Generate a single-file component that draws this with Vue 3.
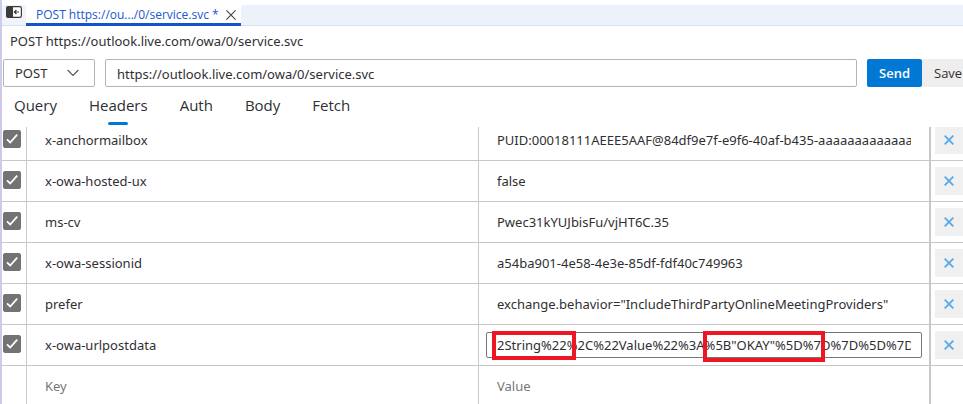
<script setup>
import { ref } from 'vue'

const title = 'POST https://outlook.live.com/owa/0/service.svc'
const method = ref('POST')
const url = ref('https://outlook.live.com/owa/0/service.svc')
const sections = ['Query', 'Headers', 'Auth', 'Body', 'Fetch']
const active = ref('Headers')
const rows = ref([
  { on: true, key: 'x-anchormailbox', value: 'PUID:00018111AEEE5AAF@84df9e7f-e9f6-40af-b435-aaaaaaaaaaaaaa' },
  { on: true, key: 'x-owa-hosted-ux', value: 'false' },
  { on: true, key: 'ms-cv', value: 'Pwec31kYUJbisFu/vjHT6C.35' },
  { on: true, key: 'x-owa-sessionid', value: 'a54ba901-4e58-4e3e-85df-fdf40c749963' },
  { on: true, key: 'prefer', value: 'exchange.behavior="IncludeThirdPartyOnlineMeetingProviders"' },
  { on: true, key: 'x-owa-urlpostdata', value: '2String%22%2C%22Value%22%3A%5B"OKAY"%5D%7D%7D%5D%7D', marked: true },
])
const draft = ref({ key: '', value: '' })

function removeRow(index) {
  rows.value.splice(index, 1)
}
</script>

<template>
  <div class="app">
    <header class="tabbar">
      <button class="panel-toggle" type="button" aria-label="Collapse panel">
        <svg width="16" height="12" viewBox="0 0 16 12">
          <rect x="0.6" y="0.6" width="14.8" height="10.8" rx="1.6" fill="#fff" stroke="#3b3b3b" stroke-width="1.2" />
          <path d="M1.8 0.6H7v10.8H1.8A1.2 1.2 0 0 1 .6 10.2V1.8A1.2 1.2 0 0 1 1.8.6z" fill="#3b3b3b" />
          <path d="M13 6H8.600M10.400 4L8.400 6l2 2" fill="none" stroke="#3b3b3b" stroke-width="1.2" />
        </svg>
      </button>
      <div class="tab">
        <a class="tab-link" href="#request">POST https://ou.../0/service.svc *</a>
        <button class="tab-close" type="button" aria-label="Close tab">
          <svg width="10" height="10" viewBox="0 0 10 10">
            <path d="M0.4 0.4L9.6 9.6M9.6 0.4L0.4 9.6" stroke="#444" stroke-width="1.1" />
          </svg>
        </button>
      </div>
      <div class="tab-rest"></div>
    </header>

    <main id="request" class="request">
      <h1 class="title">{{ title }}</h1>

      <div class="url-row">
        <div class="method">
          <select v-model="method" aria-label="Method">
            <option>POST</option>
            <option>GET</option>
          </select>
          <svg class="chevron" width="12" height="8" viewBox="0 0 12 8">
            <path d="M0.6 1L6 6.500 11.400 1" fill="none" stroke="#555" stroke-width="1.1" />
          </svg>
        </div>
        <input v-model="url" class="url" type="text" aria-label="URL" />
        <div class="actions">
          <button class="send" type="button">Send</button>
          <button class="save" type="button">Save</button>
        </div>
      </div>

      <nav class="sections">
        <button
          v-for="name in sections"
          :key="name"
          type="button"
          class="section"
          :class="{ active: name === active }"
          @click="active = name"
        >{{ name }}</button>
      </nav>

      <div class="scroller">
        <table class="headers">
          <colgroup>
            <col class="col-check" />
            <col />
            <col />
            <col class="col-delete" />
          </colgroup>
          <tbody>
            <tr v-for="(row, i) in rows" :key="row.key">
              <td class="check">
                <input v-model="row.on" type="checkbox" :aria-label="'Enable ' + row.key" />
                <svg v-if="row.on" class="tick" width="18" height="18" viewBox="0 0 18 18">
                  <path d="M4 9.300L7.200 12.500 14.200 4.600" fill="none" stroke="#fff" stroke-width="1.8" />
                </svg>
              </td>
              <td class="field">
                <input v-model="row.key" type="text" aria-label="Key" />
              </td>
              <td class="field value">
                <input v-model="row.value" type="text" aria-label="Value" :class="{ focused: row.marked }" />
                <template v-if="row.marked">
                  <span class="mark mark-type"></span>
                  <span class="mark mark-value"></span>
                </template>
              </td>
              <td class="delete">
                <button type="button" :aria-label="'Delete ' + row.key" @click="removeRow(i)">
                  <svg width="10" height="10" viewBox="0 0 10 10">
                    <path d="M0.700 0.700L9.300 9.300M9.300 0.700L0.700 9.300" stroke="#5aabea" stroke-width="1.9" />
                  </svg>
                </button>
              </td>
            </tr>
            <tr>
              <td class="check"></td>
              <td class="field"><input v-model="draft.key" type="text" placeholder="Key" aria-label="New key" /></td>
              <td class="field value"><input v-model="draft.value" type="text" placeholder="Value" aria-label="New value" /></td>
              <td class="delete"></td>
            </tr>
          </tbody>
        </table>
      </div>
    </main>
  </div>
</template>

<style>
body {
  margin: 0;
  background: #fff;
}
</style>

<style scoped>
* {
  box-sizing: border-box;
}
.app {
  height: 100vh;
  overflow: hidden;
  display: flex;
  flex-direction: column;
  border-left: 2px solid #cccbea;
  color: #2f2f33;
  font-family: "Noto Sans", "Open Sans", sans-serif;
  font-size: 13px;
}
button,
input,
select {
  font: inherit;
  color: inherit;
  margin: 0;
}
button {
  border: 0;
  padding: 0;
  background: none;
  cursor: pointer;
}
svg {
  display: block;
}
.tabbar {
  display: flex;
  height: 26px;
  padding-top: 5px;
  border-bottom: 1px solid #d3e2f8;
}
.panel-toggle {
  width: 24px;
  padding: 1px 4px 0;
  background: #f1f5fb;
  display: flex;
  align-items: flex-start;
}
.tab {
  display: flex;
  align-items: center;
  gap: 7px;
  height: 21px;
  padding: 2px 5px 0 10px;
  border-bottom: 3px solid #1453c8;
}
.tab-link {
  color: #2158cf;
  font-family: "Open Sans", "Noto Sans", sans-serif;
  font-size: 12px;
  line-height: 16px;
  text-decoration: none;
  white-space: nowrap;
}
.tab-rest {
  flex: 1;
  border-radius: 3px 0 0 0;
  background: #edf2fa;
}
.request {
  flex: 1;
  min-height: 0;
  display: flex;
  flex-direction: column;
}
.title {
  margin: 0;
  padding: 5px 8px 0;
  font-size: 13px;
  font-weight: 400;
  line-height: 20px;
}
.url-row {
  display: flex;
  gap: 10px;
  height: 28px;
  margin-top: 8px;
  padding-left: 1px;
}
.method {
  position: relative;
  width: 92px;
}
.method select {
  width: 100%;
  height: 100%;
  padding: 0 11px;
  appearance: none;
  border: 1px solid #b4b4b4;
  border-radius: 2px;
  background: #fff;
}
.chevron {
  position: absolute;
  right: 16px;
  top: 10px;
  pointer-events: none;
}
.url {
  flex: 1;
  min-width: 0;
  padding: 2px 11px 0;
  border: 1px solid #b4b4b4;
  border-radius: 2px;
}
.actions {
  display: flex;
  width: 96px;
}
.send {
  flex: none;
  width: 55px;
  background: #0078d4;
  border-radius: 2px;
  color: #fff;
  font-family: "Open Sans", "Noto Sans", sans-serif;
  font-weight: 600;
}
.save {
  flex: 1;
  padding-left: 12px;
  background: #f0eeed;
  font-family: "Open Sans", "Noto Sans", sans-serif;
  text-align: left;
}
.sections {
  display: flex;
  gap: 32px;
  height: 40px;
  padding: 8px 12px 0;
}
.section {
  position: relative;
  height: 30px;
  padding-bottom: 10px;
  font-family: "Open Sans", "Noto Sans", sans-serif;
  font-size: 15px;
  line-height: 20px;
}
.section.active::after {
  content: "";
  position: absolute;
  left: 50%;
  bottom: 0;
  width: 20px;
  height: 3px;
  margin-left: -10px;
  border-radius: 2px;
  background: #0078d4;
}
.scroller {
  flex: 1;
  min-height: 0;
  overflow: hidden;
}
.headers {
  width: 100%;
  margin-top: -7px;
  table-layout: fixed;
  border-collapse: separate;
  border-spacing: 0;
}
.col-check {
  width: 25px;
}
.col-delete {
  width: 32px;
}
.headers td {
  position: relative;
  height: 41px;
  padding: 0;
  border-bottom: 1px solid #c8c8c8;
  border-right: 1px solid #c8c8c8;
  vertical-align: middle;
}
.headers td.value {
  border-right-width: 2px;
}
.headers td.delete {
  border-right: 0;
  padding-left: 4px;
}
.check input {
  display: block;
  width: 18px;
  height: 18px;
  margin: 0 0 2px 1px;
  appearance: none;
  border: 1px solid #737373;
  border-radius: 2px;
}
.check input:checked {
  background: #737373;
}
.tick {
  position: absolute;
  left: 1px;
  top: 10px;
  pointer-events: none;
}
.headers .field {
  padding: 0 7px;
}
.field input {
  display: block;
  width: 100%;
  height: 26px;
  padding: 0 10px;
  border: 1px solid transparent;
  border-radius: 2px;
  background: transparent;
  outline: 0;
}
.field input.focused {
  border-color: #767676;
}
.field input::placeholder {
  color: #767676;
  opacity: 1;
}
.delete button {
  display: flex;
  align-items: center;
  width: 28px;
  height: 28px;
  padding-left: 9px;
  background: #f0f0f0;
}
.mark {
  position: absolute;
  top: 6px;
  height: 29px;
  border: 4px solid #ee1622;
}
.mark-type {
  left: 13px;
  width: 84px;
}
.mark-value {
  left: 224px;
  width: 122px;
  height: 31px;
}
</style>
